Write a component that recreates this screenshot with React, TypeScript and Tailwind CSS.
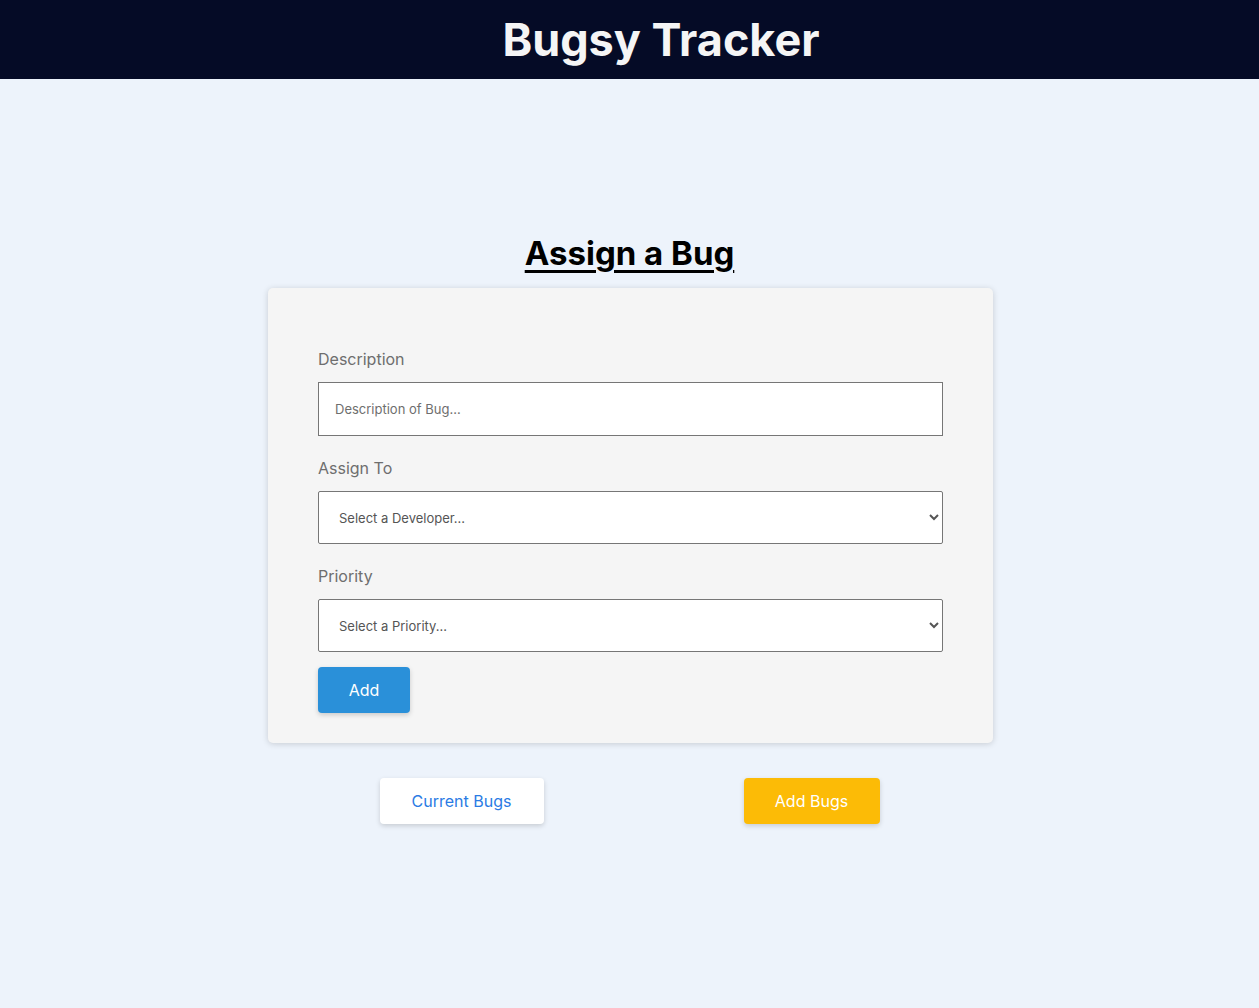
import React, { useState } from 'react';

const font = { fontFamily: 'Inter, "Open Sans", sans-serif' };

export default function App() {
  const [description, setDescription] = useState('');
  const [developer, setDeveloper] = useState('');
  const [priority, setPriority] = useState('');

  return (
    <div className="min-h-[1008px] bg-[#edf3fb]" style={font}>
      {/* Header */}
      <header className="h-[79px] bg-[#050b26] flex items-center justify-center pl-[63px]">
        <h1 className="text-[45px] font-bold text-[#f5f5f5]">Bugsy Tracker</h1>
      </header>

      <main className="flex flex-col items-center pt-[152px]">
        <h2 className="text-[33px] font-bold text-black underline underline-offset-[5px] decoration-[3px] leading-[44px]">
          Assign a Bug
        </h2>

        {/* Form card */}
        <div className="mt-[13px] ml-[2px] w-[725px] bg-[#f5f5f5] rounded-[5px] shadow-[0_1px_6px_rgba(0,0,0,0.16)] px-[50px] pt-[59px] pb-[30px]">
          <label className="block text-[16px] leading-[24px] text-[#6e6e6e]">Description</label>
          <input
            value={description}
            onChange={e => setDescription(e.target.value)}
            placeholder="Description of Bug..."
            className="mt-[11px] block w-full h-[54px] bg-white border border-[#767676] px-[16px] text-[13px] text-[#333] placeholder:text-[#6e6e6e] outline-none"
          />

          <label className="block mt-[20px] text-[16px] leading-[24px] text-[#6e6e6e]">Assign To</label>
          <select
            value={developer}
            onChange={e => setDeveloper(e.target.value)}
            className="mt-[11px] block w-full h-[53px] bg-white border border-[#767676] rounded-[2px] pl-[16px] pr-[4px] text-[13px] text-[#555] outline-none"
          >
            <option value="">Select a Developer...</option>
            <option value="dev1">Developer 1</option>
            <option value="dev2">Developer 2</option>
          </select>

          <label className="block mt-[20px] text-[16px] leading-[24px] text-[#6e6e6e]">Priority</label>
          <select
            value={priority}
            onChange={e => setPriority(e.target.value)}
            className="mt-[11px] block w-full h-[53px] bg-white border border-[#767676] rounded-[2px] pl-[16px] pr-[4px] text-[13px] text-[#555] outline-none"
          >
            <option value="">Select a Priority...</option>
            <option value="low">Low</option>
            <option value="medium">Medium</option>
            <option value="high">High</option>
          </select>

          <button className="mt-[15px] w-[92px] h-[46px] bg-[#2a90d9] text-white text-[16px] rounded-[4px] shadow-[0_2px_5px_rgba(0,0,0,0.18)]">
            Add
          </button>
        </div>

        {/* Nav buttons */}
        <div className="mt-[35px] flex gap-[200px]">
          <button className="w-[164px] h-[46px] bg-white text-[#2a7be4] text-[16px] rounded-[4px] shadow-[0_2px_5px_rgba(0,0,0,0.16)]">
            Current Bugs
          </button>
          <button className="w-[136px] h-[46px] bg-[#fcbb06] text-white text-[16px] rounded-[4px] shadow-[0_2px_5px_rgba(0,0,0,0.16)]">
            Add Bugs
          </button>
        </div>
      </main>
    </div>
  );
}
